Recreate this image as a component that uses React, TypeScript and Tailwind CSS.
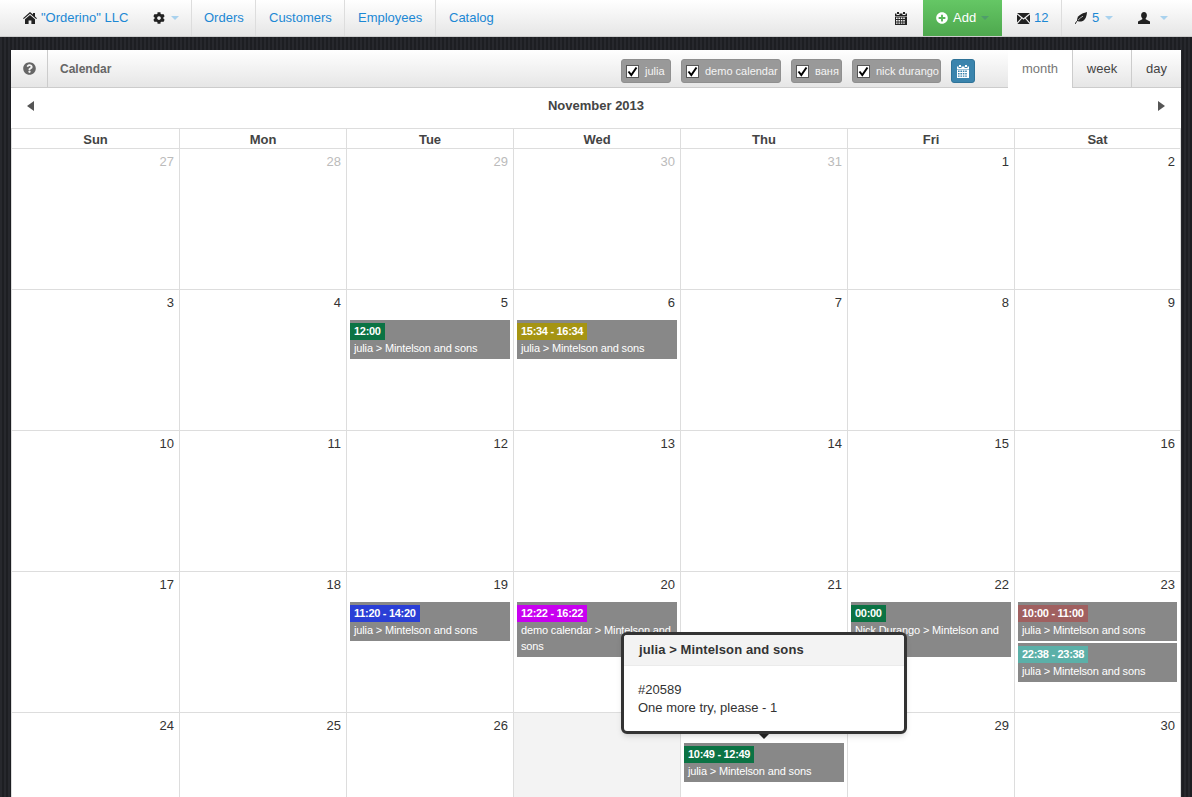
import React from 'react';
import { FaCog, FaPlusCircle, FaQuestionCircle } from 'react-icons/fa';

type Ev = { time: string; color: string; text: string };

const MINT = 'julia > Mintelson and sons';

type Day = { n: number; muted?: boolean; today?: boolean; events?: Ev[] };

const days: Day[] = [
  { n: 27, muted: true }, { n: 28, muted: true }, { n: 29, muted: true }, { n: 30, muted: true }, { n: 31, muted: true }, { n: 1 }, { n: 2 },
  { n: 3 }, { n: 4 },
  { n: 5, events: [{ time: '12:00', color: 'bg-[#0b7344]', text: MINT }] },
  { n: 6, events: [{ time: '15:34 - 16:34', color: 'bg-[#a59413]', text: MINT }] },
  { n: 7 }, { n: 8 }, { n: 9 },
  { n: 10 }, { n: 11 }, { n: 12 }, { n: 13 }, { n: 14 }, { n: 15 }, { n: 16 },
  { n: 17 }, { n: 18 },
  { n: 19, events: [{ time: '11:20 - 14:20', color: 'bg-[#2a3fd6]', text: MINT }] },
  { n: 20, events: [{ time: '12:22 - 16:22', color: 'bg-[#c800f0]', text: 'demo calendar > Mintelson and sons' }] },
  { n: 21 },
  { n: 22, events: [{ time: '00:00', color: 'bg-[#0b7344]', text: 'Nick Durango > Mintelson and sons' }] },
  {
    n: 23,
    events: [
      { time: '10:00 - 11:00', color: 'bg-[#a06060]', text: MINT },
      { time: '22:38 - 23:38', color: 'bg-[#5bb0a8]', text: MINT },
    ],
  },
  { n: 24 }, { n: 25 }, { n: 26 }, { n: 27, today: true },
  { n: 28, events: [{ time: '10:49 - 12:49', color: 'bg-[#0b7344]', text: MINT }] },
  { n: 29 }, { n: 30 },
];

const Caret = ({ color = 'border-t-[#a9d2ee]' }: { color?: string }) => (
  <span className={`inline-block w-0 h-0 border-x-4 border-t-4 border-x-transparent ${color}`} />
);

const HomeIcon = () => (
  <svg width="14" height="12" viewBox="0 0 14 12" fill="#222" className="mr-[4px]">
    <path d="M7 0 10 2.600V1h2v3.400L14 6.200l-.8.9L7 1.800.8 7.100 0 6.200z" />
    <path d="M7 3 12 7.200V12H8.400V8.400H5.600V12H2V7.200z" />
  </svg>
);

const CalendarIcon = ({ fill = '#222' }: { fill?: string }) => (
  <svg width="12" height="13" viewBox="0 0 12 13" fill={fill}>
    <path d="M2 0h2v2H2zM8 0h2v2H8zM0 1.500h1.500v1.500h3V1.500h3v1.500h3V1.500H12V4H0z" />
    <path
      fillRule="evenodd"
      d="M0 4.600h12V13H0zM1 5.600v1.400h1.600V5.600zM3.400 5.600v1.400H5V5.600zM5.800 5.600v1.400h1.600V5.600zM8.200 5.600v1.400h1.600V5.600zM1 8v1.400h1.600V8zM3.400 8v1.400H5V8zM5.800 8v1.400h1.600V8zM8.200 8v1.400h1.600V8zM1 10.400v1.400h1.600v-1.400zM3.400 10.400v1.400H5v-1.400zM5.800 10.400v1.400h1.600v-1.400zM8.200 10.400v1.400h1.600v-1.400z"
    />
  </svg>
);

const Envelope = () => (
  <svg width="13" height="11" viewBox="0 0 13 11" fill="#222">
    <path d="M0 0h13L6.500 5.200zM0 1.500v8l4.200-4.600zM13 1.500v8L8.800 4.900zM5 5.600l1.500 1.200L8 5.600l4.600 5.400H.4z" />
  </svg>
);

const LeafIcon = () => (
  <svg width="12" height="12" viewBox="0 0 12 12">
    <path d="M12 0C11.500 6 9.500 9.600 4.600 9.600 3.400 9.600 2.600 9.200 2.200 8.800 1.600 4 6 1.600 12 0z" fill="#222" />
    <path d="M0 12 C2 8.500 4.500 6 8 4" fill="none" stroke="#222" strokeWidth="1" />
    <path d="M3 8.200C4.600 6.400 6.200 5.200 8 4.200" fill="none" stroke="#eee" strokeWidth="0.7" />
  </svg>
);

const UserIcon = () => (
  <svg width="12" height="12" viewBox="0 0 12 12" fill="#222">
    <path d="M6 0c1.800 0 2.900 1.300 2.900 3.200 0 1.300-.5 2.400-1.200 3.100v1l4.300 2.200V12H0V9.500l4.300-2.200v-1C3.600 5.600 3.100 4.500 3.100 3.200 3.100 1.300 4.200 0 6 0z" />
  </svg>
);

const Chip = ({ label, width }: { label: string; width: string }) => (
  <label className={`flex items-center h-6 rounded-[3px] bg-[#999] border border-[#8f8f8f] text-[11px] text-[#f4f4f4] pl-[4px] gap-[6px] ${width}`}>
    <span className="flex items-center justify-center w-[13px] h-[13px] shrink-0 bg-white border border-[#555]">
      <svg width="11" height="11" viewBox="0 0 11 11">
        <path d="M1.500 5.500 4.300 9 9.500 1.500" fill="none" stroke="#000" strokeWidth="2" />
      </svg>
    </span>
    <span className="whitespace-nowrap">{label}</span>
  </label>
);

const Event = ({ ev }: { ev: Ev }) => (
  <div className="mx-[3px] mb-[2px] bg-[#888] py-[3px] text-[11px] leading-4 tracking-[-0.14px] text-white">
    <div className={`w-fit h-[17px] px-1 font-bold leading-[17px] tracking-[-0.3px] ${ev.color}`}>{ev.time}</div>
    <div className="pl-1">{ev.text}</div>
  </div>
);

export default function App() {
  return (
    <div className="relative h-[797px] overflow-hidden bg-[#23242a] bg-[repeating-linear-gradient(90deg,#27282d_0px,#27282d_2px,#1d1e22_2px,#1d1e22_4px)] font-['Liberation_Sans',Arial,sans-serif] text-[#333]">
      {/* Top nav */}
      <header className="flex h-[37px] items-stretch bg-linear-to-b from-white to-[#e6e6e6] border-b border-[#ccc] text-[13px] text-[#1c88d4]">
        <div className="flex items-center pl-[23px] w-[192px] border-r border-[#ddd]">
          <HomeIcon />
          <span>"Orderino" LLC</span>
          <FaCog size={12} className="text-[#222] ml-[25px]" />
          <span className="ml-[6px] flex"><Caret /></span>
        </div>
        <div className="flex items-center pl-[12px] w-[64px] border-r border-[#ddd]">Orders</div>
        <div className="flex items-center px-[13px] w-[89px] border-r border-[#ddd]">Customers</div>
        <div className="flex items-center px-[13px] w-[91px] border-r border-[#ddd]">Employees</div>
        <div className="flex items-center px-[13px]">Catalog</div>
        <div className="ml-auto flex items-stretch">
          <div className="flex items-center pr-[16px]">
            <CalendarIcon />
          </div>
          <div className="flex items-center w-[79px] pl-[13px] gap-[5px] bg-linear-to-b from-[#65c765] to-[#4ea84e] text-white">
            <FaPlusCircle size={12} />
            <span>Add</span>
            <Caret color="border-t-[#4f9d6b]" />
          </div>
          <div className="flex items-center w-[60px] pl-[15px] gap-[4px] border-r border-[#ddd]">
            <Envelope />
            <span>12</span>
          </div>
          <div className="flex items-center w-[76px] pl-[13px] gap-[5px]">
            <LeafIcon />
            <span className="mr-[1px]">5</span>
            <Caret />
          </div>
          <div className="flex items-center w-[54px] gap-[10px]">
            <UserIcon />
            <Caret />
          </div>
        </div>
      </header>

      {/* Panel */}
      <main className="mx-[11px] mt-[13px] bg-white">
        <div className="flex h-[38px] items-stretch bg-linear-to-b from-white to-[#e6e6e6] border-b border-[#ccc]">
          <div className="flex items-center justify-center w-[37px] border-r border-[#ccc]">
            <FaQuestionCircle size={13} className="text-[#666]" />
          </div>
          <div className="flex items-center pl-[12px] text-[12px] font-bold text-[#666]">Calendar</div>
          <div className="ml-auto flex items-center gap-[10px] pr-[33px] pt-[5px]">
            <Chip label="julia" width="w-[50px]" />
            <Chip label="demo calendar" width="w-[100px]" />
            <Chip label="ваня" width="w-[51px]" />
            <Chip label="nick durango" width="w-[89px]" />
            <div className="flex items-center justify-center w-6 h-6 rounded-[3px] bg-[#3a84ad] border border-[#2f7398]">
              <CalendarIcon fill="#fff" />
            </div>
          </div>
          <div className="flex text-[13px] text-[#444]">
            <div className="flex items-center justify-center w-[65px] h-[38px] bg-white text-[#777] border-r border-[#ccc]">month</div>
            <div className="flex items-center justify-center w-[59px] border-r border-[#ccc]">week</div>
            <div className="flex items-center justify-center w-[49px]">day</div>
          </div>
        </div>

        <div className="flex h-[40px] items-center justify-between pl-[16px] pr-[16px] pb-[5px]">
          <svg width="7" height="10" viewBox="0 0 7 10" fill="#555"><path d="M7 0v10L0 5z" /></svg>
          <span className="text-[13px] font-bold text-[#444]">November 2013</span>
          <svg width="7" height="10" viewBox="0 0 7 10" fill="#555"><path d="M0 0v10l7-5z" /></svg>
        </div>

        <div className="grid grid-cols-[168px_repeat(6,167px)] border-t border-[#ddd] text-center text-[13px] font-bold text-[#444]">
          {['Sun', 'Mon', 'Tue', 'Wed', 'Thu', 'Fri', 'Sat'].map((d, i) => (
            <div key={d} className={`h-[19px] leading-[21px] border-l border-[#ddd] ${i === 6 ? 'border-r' : ''}`}>{d}</div>
          ))}
        </div>

        <div className="grid grid-cols-[168px_repeat(6,167px)]">
          {days.map((d, i) => (
            <div
              key={i}
              className={`h-[141px] border-t border-l border-[#ddd] ${i % 7 === 6 ? 'border-r' : ''} ${d.today ? 'bg-[#f3f3f3]' : ''}`}
            >
              <div className={`h-[30px] pt-[5px] pr-[5px] text-right text-[13px] leading-[16px] ${d.muted ? 'text-[#bbb]' : 'text-[#333]'}`}>
                {d.n}
              </div>
              {d.events?.map((ev) => <Event key={ev.time} ev={ev} />)}
            </div>
          ))}
        </div>
      </main>

      {/* Popover */}
      <div className="absolute left-[621px] top-[632px] w-[286px] rounded-[6px] border-[3px] border-[#333] bg-white shadow-md">
        <div className="h-[31px] bg-[#f3f3f3] border-b border-[#ebebeb] pl-[15px] text-[13px] font-bold leading-[30px] tracking-[0.1px] text-[#333] rounded-t-[3px]">
          {MINT}
        </div>
        <div className="px-[14px] pt-[15px] pb-[14px] text-[13px] leading-[18px] text-[#333]">
          <div>#20589</div>
          <div>One more try, please - 1</div>
        </div>
        <span className="absolute left-[135px] -bottom-[8px] w-0 h-0 border-x-[5px] border-t-[5px] border-x-transparent border-t-[#222]" />
      </div>
    </div>
  );
}
